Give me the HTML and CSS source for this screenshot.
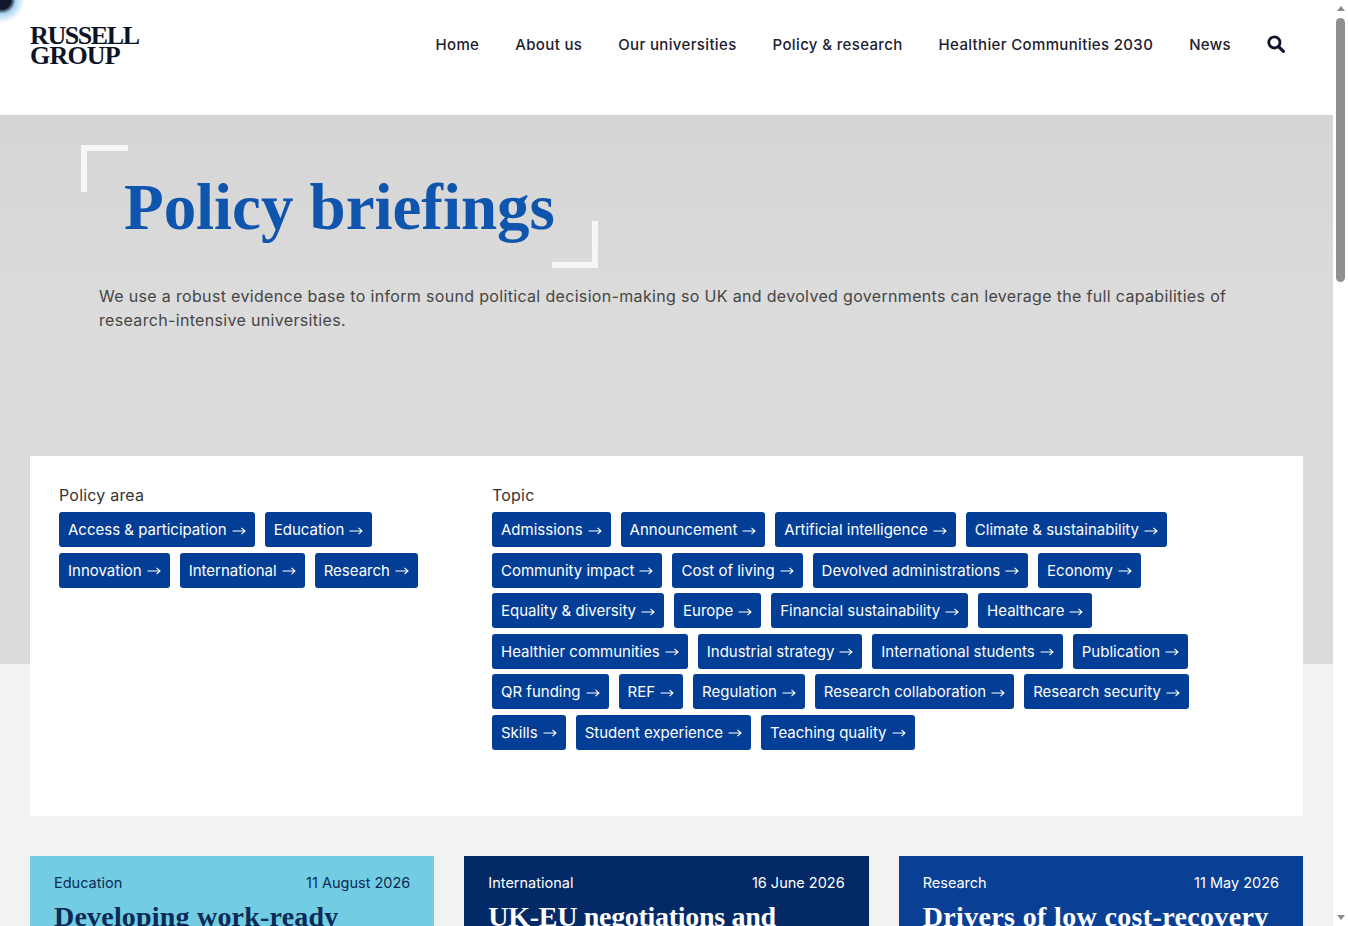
FILE: index.html
```html
<!DOCTYPE html>
<html lang="en">
  <head>
    <meta charset="UTF-8" />
    <title>Policy briefings</title>
    <link rel="stylesheet" href="styles.css">
  </head>

  <body>
    <svg class="defs" width="0" height="0">
      <symbol id="arrow" viewBox="0 0 14 10">
        <path d="M0.5 5H13M9.5 1.8L13 5L9.5 8.2" fill="none" stroke="currentColor" stroke-width="1.1"/>
      </symbol>
    </svg>

    <div class="window">
      <div class="page">
        <div class="cornerBlob"></div>

        <header class="siteHeader">
          <a class="logo"><span class="logoTop">RUSSELL</span><span class="logoBottom">GROUP</span></a>
          <nav class="mainNav">
            <a>Home</a>
            <a>About us</a>
            <a>Our universities</a>
            <a>Policy &amp; research</a>
            <a>Healthier Communities 2030</a>
            <a>News</a>
            <svg class="searchIcon" viewBox="0 0 18 18">
              <circle cx="7.4" cy="7.4" r="5.6" fill="none" stroke="currentColor" stroke-width="2.8"/>
              <path d="M11.6 11.6L16.4 16.4" fill="none" stroke="currentColor" stroke-width="3.2" stroke-linecap="round"/>
            </svg>
          </nav>
        </header>

        <section class="hero">
          <h1 class="heroTitle">Policy briefings</h1>
          <p class="heroText">We use a robust evidence base to inform sound political decision-making so UK and devolved governments can leverage the full capabilities of research-intensive universities.</p>
        </section>

        <main class="content">
          <section class="filters">
            <div class="filterArea">
              <h2 class="filterLabel">Policy area</h2>
              <div class="tagList">
                <a class="tag">Access &amp; participation <svg><use href="#arrow"/></svg></a>
                <a class="tag">Education <svg><use href="#arrow"/></svg></a>
                <a class="tag">Innovation <svg><use href="#arrow"/></svg></a>
                <a class="tag">International <svg><use href="#arrow"/></svg></a>
                <a class="tag">Research <svg><use href="#arrow"/></svg></a>
              </div>
            </div>
            <div class="filterTopic">
              <h2 class="filterLabel">Topic</h2>
              <div class="tagList">
                <a class="tag">Admissions <svg><use href="#arrow"/></svg></a>
                <a class="tag">Announcement <svg><use href="#arrow"/></svg></a>
                <a class="tag">Artificial intelligence <svg><use href="#arrow"/></svg></a>
                <a class="tag">Climate &amp; sustainability <svg><use href="#arrow"/></svg></a>
                <a class="tag">Community impact <svg><use href="#arrow"/></svg></a>
                <a class="tag">Cost of living <svg><use href="#arrow"/></svg></a>
                <a class="tag">Devolved administrations <svg><use href="#arrow"/></svg></a>
                <a class="tag">Economy <svg><use href="#arrow"/></svg></a>
                <a class="tag">Equality &amp; diversity <svg><use href="#arrow"/></svg></a>
                <a class="tag">Europe <svg><use href="#arrow"/></svg></a>
                <a class="tag">Financial sustainability <svg><use href="#arrow"/></svg></a>
                <a class="tag">Healthcare <svg><use href="#arrow"/></svg></a>
                <a class="tag">Healthier communities <svg><use href="#arrow"/></svg></a>
                <a class="tag">Industrial strategy <svg><use href="#arrow"/></svg></a>
                <a class="tag">International students <svg><use href="#arrow"/></svg></a>
                <a class="tag">Publication <svg><use href="#arrow"/></svg></a>
                <a class="tag">QR funding <svg><use href="#arrow"/></svg></a>
                <a class="tag">REF <svg><use href="#arrow"/></svg></a>
                <a class="tag">Regulation <svg><use href="#arrow"/></svg></a>
                <a class="tag">Research collaboration <svg><use href="#arrow"/></svg></a>
                <a class="tag">Research security <svg><use href="#arrow"/></svg></a>
                <a class="tag">Skills <svg><use href="#arrow"/></svg></a>
                <a class="tag">Student experience <svg><use href="#arrow"/></svg></a>
                <a class="tag">Teaching quality <svg><use href="#arrow"/></svg></a>
              </div>
            </div>
          </section>

          <section class="cards">
            <article class="card cardLight">
              <div class="cardMeta"><span>Education</span><span>11 August 2026</span></div>
              <h3 class="cardTitle cardTitleOne">Developing work-ready</h3>
            </article>
            <article class="card cardNavy">
              <div class="cardMeta"><span>International</span><span>16 June 2026</span></div>
              <h3 class="cardTitle">UK-EU negotiations and</h3>
            </article>
            <article class="card cardBlue">
              <div class="cardMeta"><span>Research</span><span>11 May 2026</span></div>
              <h3 class="cardTitle cardTitleThree">Drivers of low cost-recovery</h3>
            </article>
          </section>
        </main>
      </div>

      <div class="scrollbar">
        <div class="scrollUp"></div>
        <div class="scrollTrack"><div class="scrollThumb"></div></div>
        <div class="scrollDown"></div>
      </div>
    </div>
  </body>
</html>
```

FILE: styles.css
```css
html, body {
  margin: 0;
  height: 926px;
  overflow: hidden;
  background: #fff;
}

body {
  font-family: Inter, "Open Sans", sans-serif;
  color: #3c3c3c;
}

.defs {
  display: block;
  height: 0;
}

.window {
  display: flex;
  height: 926px;
}

.page {
  position: relative;
  flex: 1;
  min-width: 0;
  overflow: hidden;
  background: linear-gradient(#d5d5d5 115px, #dcdcdc 320px, #dcdcdc 664px, #f2f2f2 664px);
}

.cornerBlob {
  position: absolute;
  top: -18px;
  left: -18px;
  width: 44px;
  height: 40px;
  border-radius: 50%;
  background: radial-gradient(circle at 45% 45%, #10182c 0 28%, #a9d4f2 42%, rgba(255,255,255,0) 70%);
}

/* header */
.siteHeader {
  display: flex;
  justify-content: space-between;
  height: 115px;
  padding: 0 48px 0 30px;
  background: #fff;
}

.logo {
  position: relative;
  margin-top: 26px;
  font-family: "Liberation Serif", serif;
  font-weight: bold;
  font-size: 26px;
  line-height: 20px;
  color: #0d1428;
}

.logoTop,
.logoBottom {
  display: block;
}

.logoTop {
  letter-spacing: -1.4px;
}

.logoBottom {
  letter-spacing: -0.8px;
}

.mainNav {
  display: flex;
  align-items: center;
  gap: 36px;
  height: 88px;
  font-size: 15px;
  font-weight: 500;
  letter-spacing: 0.35px;
  color: #1c2030;
}

.searchIcon {
  width: 18px;
  height: 18px;
  margin-top: -1px;
  color: #0d1428;
}

/* hero */
.hero {
  height: 341px;
  padding-top: 30px;
  box-sizing: border-box;
}

.heroTitle {
  position: relative;
  width: 517px;
  height: 123px;
  margin: 0 0 16px 81px;
  padding-left: 43px;
  box-sizing: border-box;
  font-family: "Liberation Serif", serif;
  font-size: 65px;
  line-height: 124px;
  font-weight: bold;
  letter-spacing: -0.05px;
  color: #0f55ad;
}

.heroTitle::before,
.heroTitle::after {
  content: "";
  position: absolute;
  height: 41px;
  border: 0 solid #f6f6f6;
}

.heroTitle::before {
  top: 0;
  left: 0;
  width: 41px;
  border-width: 6px 0 0 6px;
}

.heroTitle::after {
  right: 0;
  bottom: 0;
  width: 40px;
  border-width: 0 6px 6px 0;
}

.heroText {
  width: 1140px;
  margin: 0 0 0 99px;
  font-size: 16px;
  line-height: 24px;
  letter-spacing: 0.33px;
  color: #454545;
}

/* filters */
.content {
  padding: 0 30px;
}

.filters {
  display: flex;
  height: 360px;
  padding: 29px 29px 0;
  box-sizing: border-box;
  background: #fff;
}

.filterArea {
  width: 433px;
  flex: none;
}

.filterTopic {
  flex: 1;
}

.filterLabel {
  margin: 0 0 7px;
  font-size: 16px;
  line-height: 20px;
  font-weight: 400;
  letter-spacing: 0.2px;
  color: #333;
}

.tagList {
  display: flex;
  flex-wrap: wrap;
  gap: 5.6px 10px;
  padding-right: 20px;
}

.tag {
  display: flex;
  align-items: center;
  height: 35px;
  padding: 0 9px;
  box-sizing: border-box;
  gap: 5px;
  border-radius: 3px;
  background: #033e96;
  color: #fff;
  font-size: 15px;
  white-space: nowrap;
}

.tag svg {
  width: 14px;
  height: 10px;
  margin-top: 2px;
}

/* cards */
.cards {
  display: grid;
  grid-template-columns: repeat(3, 1fr);
  gap: 30px;
  margin-top: 40px;
}

.card {
  height: 240px;
  padding: 18px 24px;
  box-sizing: border-box;
}

.cardLight {
  background: #72cde2;
  color: #0b2a55;
}

.cardNavy {
  background: #032a66;
  color: #fff;
}

.cardBlue {
  background: #0a3f96;
  color: #fff;
}

.cardMeta {
  display: flex;
  justify-content: space-between;
  font-size: 14.5px;
  line-height: 18px;
}

.cardTitle {
  margin: 8px 0 0;
  font-family: "Liberation Serif", serif;
  font-size: 28px;
  line-height: 34px;
  font-weight: bold;
  letter-spacing: -0.3px;
}

.cardTitleOne {
  letter-spacing: 0.2px;
}

.cardTitleThree {
  letter-spacing: 0.35px;
}

/* scrollbar drawn by hand, the page itself is clipped */
.scrollbar {
  display: flex;
  flex-direction: column;
  align-items: center;
  flex: none;
  width: 15px;
  height: 926px;
  background: #fff;
}

.scrollUp,
.scrollDown {
  width: 0;
  height: 0;
  margin: 6px 0;
  border-left: 4.5px solid transparent;
  border-right: 4.5px solid transparent;
}

.scrollUp {
  border-bottom: 5px solid #8a8a8a;
}

.scrollDown {
  border-top: 5px solid #8a8a8a;
}

.scrollTrack {
  flex: 1;
  width: 100%;
}

.scrollThumb {
  width: 9px;
  height: 264px;
  margin: 1px auto 0;
  border-radius: 5px;
  background: #8f8f8f;
}
```
